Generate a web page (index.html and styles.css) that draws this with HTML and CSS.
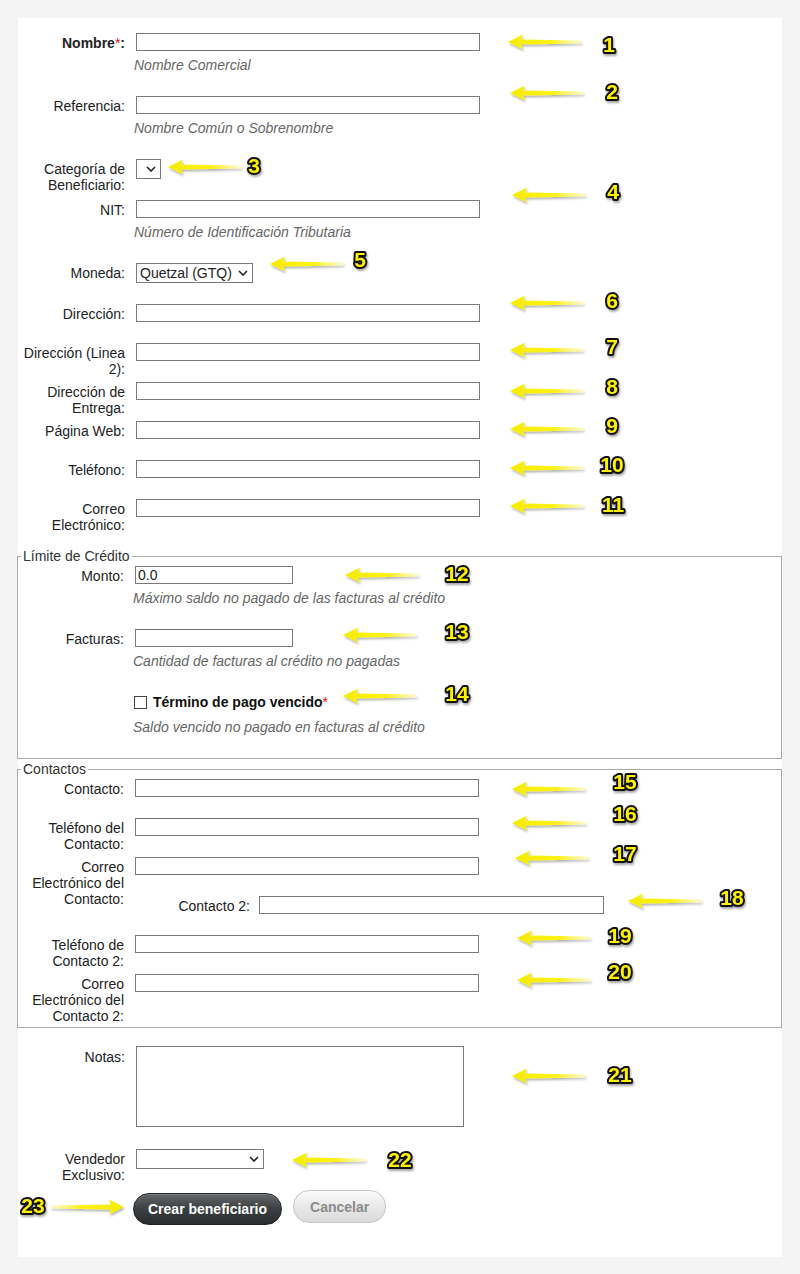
FILE: index.html
```html
<!DOCTYPE html>
<html lang="es">
  <head>
    <meta charset="utf-8">
    <meta name="viewport" content="width=device-width, initial-scale=1.0">
    <title>Nuevo beneficiario</title>
    <link rel="stylesheet" href="styles.css">
  </head>
  <body>
    <form class="sheet">
      <div class="row">
        <label class="lbl strong" for="nombre">Nombre<span class="req">*</span>:</label>
        <div class="field">
          <input id="nombre" type="text">
          <p class="hint">Nombre Comercial</p>
        </div>
      </div>
      <div class="row">
        <label class="lbl" for="referencia">Referencia:</label>
        <div class="field">
          <input id="referencia" type="text">
          <p class="hint">Nombre Común o Sobrenombre</p>
        </div>
      </div>
      <div class="row">
        <label class="lbl" for="categoria">Categoría de Beneficiario:</label>
        <div class="field">
          <span class="pick">
            <select id="categoria" class="sel-tiny"><option></option></select>
            <svg class="chev" viewBox="0 0 10 6"><polyline points="1,1 5,5 9,1"/></svg>
          </span>
        </div>
      </div>
      <div class="row">
        <label class="lbl" for="nit">NIT:</label>
        <div class="field">
          <input id="nit" type="text">
          <p class="hint">Número de Identificación Tributaria</p>
        </div>
      </div>
      <div class="row">
        <label class="lbl" for="moneda">Moneda:</label>
        <div class="field">
          <span class="pick">
            <select id="moneda" class="sel-money"><option>Quetzal (GTQ)</option></select>
            <svg class="chev" viewBox="0 0 10 6"><polyline points="1,1 5,5 9,1"/></svg>
          </span>
        </div>
      </div>
      <div class="row">
        <label class="lbl" for="dir1">Dirección:</label>
        <div class="field"><input id="dir1" type="text"></div>
      </div>
      <div class="row">
        <label class="lbl" for="dir2">Dirección (Linea 2):</label>
        <div class="field"><input id="dir2" type="text"></div>
      </div>
      <div class="row">
        <label class="lbl" for="entrega">Dirección de Entrega:</label>
        <div class="field"><input id="entrega" type="text"></div>
      </div>
      <div class="row">
        <label class="lbl" for="web">Página Web:</label>
        <div class="field"><input id="web" type="text"></div>
      </div>
      <div class="row">
        <label class="lbl" for="tel">Teléfono:</label>
        <div class="field"><input id="tel" type="text"></div>
      </div>
      <div class="row">
        <label class="lbl" for="correo">Correo Electrónico:</label>
        <div class="field"><input id="correo" type="text"></div>
      </div>

      <fieldset class="box">
        <legend>Límite de Crédito</legend>
        <div class="row">
          <label class="lbl" for="monto">Monto:</label>
          <div class="field">
            <input id="monto" class="short" type="text" value="0.0">
            <p class="hint">Máximo saldo no pagado de las facturas al crédito</p>
          </div>
        </div>
        <div class="row">
          <label class="lbl" for="facturas">Facturas:</label>
          <div class="field">
            <input id="facturas" class="short" type="text">
            <p class="hint">Cantidad de facturas al crédito no pagadas</p>
          </div>
        </div>
        <div class="row row-check">
          <span></span>
          <div class="field">
            <label class="check"><input type="checkbox">Término de pago vencido<span class="req">*</span></label>
            <p class="hint">Saldo vencido no pagado en facturas al crédito</p>
          </div>
        </div>
      </fieldset>

      <fieldset class="box box-contacts">
        <legend>Contactos</legend>
        <div class="row">
          <label class="lbl" for="contacto">Contacto:</label>
          <div class="field"><input id="contacto" type="text"></div>
        </div>
        <div class="row">
          <label class="lbl" for="tel-contacto">Teléfono del Contacto:</label>
          <div class="field"><input id="tel-contacto" type="text"></div>
        </div>
        <div class="row">
          <label class="lbl" for="mail-contacto">Correo Electrónico del Contacto:</label>
          <div class="field"><input id="mail-contacto" type="text"></div>
        </div>
        <div class="row row-c2">
          <label class="lbl" for="contacto2">Contacto 2:</label>
          <div class="field"><input id="contacto2" type="text"></div>
        </div>
        <div class="row">
          <label class="lbl" for="tel-contacto2">Teléfono de Contacto 2:</label>
          <div class="field"><input id="tel-contacto2" type="text"></div>
        </div>
        <div class="row row-last">
          <label class="lbl" for="mail-contacto2">Correo Electrónico del Contacto 2:</label>
          <div class="field"><input id="mail-contacto2" type="text"></div>
        </div>
      </fieldset>

      <div class="row row-notes">
        <label class="lbl" for="notas">Notas:</label>
        <div class="field"><textarea id="notas"></textarea></div>
      </div>
      <div class="row">
        <label class="lbl" for="vendedor">Vendedor Exclusivo:</label>
        <div class="field">
          <span class="pick">
            <select id="vendedor" class="sel-seller"><option></option></select>
            <svg class="chev" viewBox="0 0 10 6"><polyline points="1,1 5,5 9,1"/></svg>
          </span>
        </div>
      </div>
      <div class="actions">
        <button type="submit" class="btn btn-dark">Crear beneficiario</button>
        <button type="button" class="btn btn-light">Cancelar</button>
      </div>
    </form>

    <!-- numbered callouts drawn over the form -->
    <svg class="callouts" width="800" height="1274" viewBox="0 0 800 1274">
      <defs>
        <linearGradient id="shaft" x1="0" x2="1" y1="0" y2="0">
          <stop offset="0" stop-color="#f4ec00"/>
          <stop offset="0.6" stop-color="#fff21a"/>
          <stop offset="1" stop-color="#fffab0" stop-opacity="0.6"/>
        </linearGradient>
        <filter id="soft" x="-20%" y="-60%" width="140%" height="220%">
          <feDropShadow dx="1" dy="2" stdDeviation="1.2" flood-color="#000" flood-opacity="0.3"/>
        </filter>
        <path id="arrow" d="M0 0 L15 -7.5 L13 -2.6 L73 -1.4 Q75 0 73 1.4 L13 2.6 L15 7.5 Z"/>
      </defs>
      <g class="arrows" fill="url(#shaft)" filter="url(#soft)">
        <use href="#arrow" x="508" y="42"/>
        <use href="#arrow" x="510" y="93"/>
        <use href="#arrow" x="168" y="167"/>
        <use href="#arrow" x="512" y="195"/>
        <use href="#arrow" x="270" y="264"/>
        <use href="#arrow" x="510" y="303"/>
        <use href="#arrow" x="510" y="350"/>
        <use href="#arrow" x="510" y="391"/>
        <use href="#arrow" x="510" y="429"/>
        <use href="#arrow" x="510" y="468"/>
        <use href="#arrow" x="510" y="506"/>
        <use href="#arrow" x="345" y="575"/>
        <use href="#arrow" x="343" y="635"/>
        <use href="#arrow" x="343" y="696"/>
        <use href="#arrow" x="512" y="789"/>
        <use href="#arrow" x="512" y="823"/>
        <use href="#arrow" x="515" y="858"/>
        <use href="#arrow" x="628" y="901"/>
        <use href="#arrow" x="517" y="938"/>
        <use href="#arrow" x="517" y="980"/>
        <use href="#arrow" x="512" y="1076"/>
        <use href="#arrow" x="292" y="1160"/>
        <use href="#arrow" transform="translate(124 1207) scale(-1 1)"/>
      </g>
      <g class="nums" text-anchor="middle">
        <text x="609" y="52">1</text>
        <text x="612" y="99">2</text>
        <text x="254" y="173">3</text>
        <text x="613" y="199">4</text>
        <text x="360" y="267">5</text>
        <text x="612" y="308">6</text>
        <text x="612" y="354">7</text>
        <text x="612" y="394">8</text>
        <text x="612" y="433">9</text>
        <text x="612" y="472">10</text>
        <text x="613" y="512">11</text>
        <text x="457" y="581">12</text>
        <text x="457" y="639">13</text>
        <text x="457" y="701">14</text>
        <text x="625" y="789">15</text>
        <text x="625" y="821">16</text>
        <text x="625" y="861">17</text>
        <text x="732" y="905">18</text>
        <text x="620" y="943">19</text>
        <text x="620" y="979">20</text>
        <text x="620" y="1082">21</text>
        <text x="400" y="1167">22</text>
        <text x="33" y="1213">23</text>
      </g>
    </svg>
  </body>
</html>
```

FILE: styles.css
```css
* {
  box-sizing: border-box;
}
html, body {
  margin: 0;
}
body {
  position: relative;
  background: #f4f4f4;
  color: #222;
  font: 14px/16px "Liberation Sans", Arial, sans-serif;
}
p {
  margin: 0;
}
.sheet {
  margin: 18px;
  padding: 15px 0 32px;
  background: #fff;
}
.row {
  display: grid;
  grid-template-columns: 107px 344px;
  column-gap: 11px;
  align-items: start;
  padding-bottom: 21px;
}
/* labels may wrap onto extra lines without pushing the row down */
.lbl {
  height: 18px;
  padding-top: 2px;
  text-align: right;
}
.strong {
  font-weight: 700;
}
.req {
  color: #d11;
  font-weight: 400;
}
input[type="text"] {
  display: block;
  width: 344px;
  height: 18px;
  margin: 0;
  padding: 0 2px;
  border: 1px solid #7a7a7a;
  border-radius: 0;
  font: inherit;
  color: #222;
  background: #fff;
}
input.short {
  width: 158px;
}
textarea {
  display: block;
  width: 328px;
  height: 81px;
  margin: 0;
  border: 1px solid #7a7a7a;
  border-radius: 0;
  resize: none;
  font: inherit;
}
.hint {
  margin: 6px 0 2px -2px;
  font-style: italic;
  color: #666;
}
.pick {
  position: relative;
  display: inline-block;
  vertical-align: top;
}
.pick select {
  display: block;
  appearance: none;
  height: 20px;
  margin: 0;
  padding: 0 18px 0 3px;
  border: 1px solid #7a7a7a;
  border-radius: 0;
  background: #fff;
  font: inherit;
  color: #222;
}
.sel-tiny {
  width: 25px;
}
.sel-money {
  width: 117px;
}
.sel-seller {
  width: 128px;
}
.chev {
  position: absolute;
  right: 5px;
  top: 7px;
  width: 10px;
  height: 6px;
  fill: none;
  stroke: #222;
  stroke-width: 1.6;
  pointer-events: none;
}
.box {
  margin: 10px 0 0 -1px;
  padding: 2px 0 0 3px;
  border: 1px solid #ababab;
  min-width: 0;
}
.box legend {
  padding: 0 2px;
  color: #333;
}
.box .row {
  grid-template-columns: 103px 344px;
}
.box-contacts {
  margin-top: 2px;
}
.box .row-c2 {
  grid-template-columns: 229px 345px;
  column-gap: 9px;
}
.box .row-c2 input {
  width: 345px;
}
.box .row-last {
  padding-bottom: 3px;
}
.row-last .lbl {
  height: auto;
}
.box .row-check {
  padding-bottom: 21px;
}
.row-check .hint {
  margin-top: 7px;
}
.check {
  display: flex;
  align-items: center;
  height: 20px;
  font-weight: 700;
  color: #111;
}
.check input {
  appearance: none;
  width: 13px;
  height: 13px;
  margin: 0 6px 0 -1px;
  border: 1px solid #444;
  background: #fff;
}
.row-notes {
  margin-top: 18px;
  padding-bottom: 22px;
}
.row-notes .lbl {
  padding-top: 3px;
}
.actions {
  display: flex;
  align-items: flex-start;
  gap: 11px;
  padding-left: 115px;
}
.btn {
  margin: 0;
  font: 700 14px/16px "Liberation Sans", Arial, sans-serif;
  cursor: pointer;
}
.btn-dark {
  height: 32px;
  margin-top: 3px;
  padding: 0 14px;
  border: 1px solid #1f2122;
  border-radius: 16px;
  background: linear-gradient(#63676a, #3b3f41 50%, #2b2e30);
  color: #fff;
  box-shadow: inset 0 1px 0 rgba(255, 255, 255, 0.18);
}
.btn-light {
  height: 33px;
  padding: 0 16px;
  border: 1px solid #c6c6c6;
  border-radius: 16px;
  background: linear-gradient(#fbfbfb, #e9e9e9 50%, #dadada);
  color: #8a8a8a;
}
.callouts {
  position: absolute;
  top: 0;
  left: 0;
  pointer-events: none;
}
.nums text {
  font: 700 21px "Liberation Sans", Arial, sans-serif;
  fill: #fff200;
  stroke: #111;
  stroke-width: 4;
  stroke-linejoin: round;
  paint-order: stroke;
  filter: drop-shadow(1px 2px 1px rgba(0, 0, 0, 0.35));
}
```
